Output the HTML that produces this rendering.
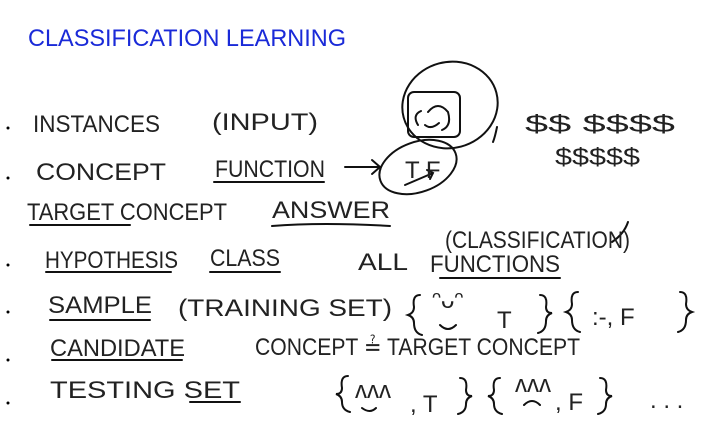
<!DOCTYPE html>
<html><head><meta charset="utf-8"><style>
html,body{margin:0;padding:0;background:#fff;width:712px;height:426px;overflow:hidden}
svg text{font-family:"Liberation Sans",sans-serif;fill:#222;font-size:24px}
</style></head><body>
<svg width="712" height="426" viewBox="0 0 712 426" xmlns="http://www.w3.org/2000/svg">
<g fill="none" stroke="#111" stroke-width="2" stroke-linecap="round">
<ellipse cx="450" cy="105" rx="48" ry="43" transform="rotate(-15 450 105)"/>
<rect x="408" y="92" width="52" height="45" rx="6"/>
<path d="M418 125 q-6 -10 3 -14 M428 112 q10 -12 20 0 q4 14 -6 18 M425 125 q6 5 14 -2"/>
<path d="M497 127 q-2 10 -4 15"/>
<ellipse cx="418" cy="167" rx="40" ry="25" transform="rotate(-20 418 167)"/>
<path d="M405 185 l28 -12 m-6 -3 l6 3 -3 6"/>
<path d="M345 167 h35 m-8 -7 l8 7 -8 7"/>
<path d="M214 182 h110 M30 225 h100 M46 272 h125 M210 272 h70 M50 320 h100 M52 360 h130 M190 402 h50 M440 278 h120 M272 226 q50 -4 118 0"/>
<path d="M612 242 q12 -8 16 -20"/>
<path d="M420 295 q-8 0 -6 12 q0 6 -6 8 q6 2 6 8 q0 10 8 12 M540 295 q8 0 6 12 q0 6 6 6 q-6 2 -6 8 q0 10 -8 12"/>
<path d="M578 292 q-8 0 -6 12 q0 6 -6 8 q6 2 6 8 q0 10 8 12 M680 292 q8 0 6 12 q0 6 6 8 q-6 2 -6 8 q0 10 -8 12"/>
<path d="M348 376 q-8 0 -6 12 q0 6 -6 6 q6 2 6 8 q0 8 8 10 M460 378 q8 0 6 12 q0 6 6 6 q-6 2 -6 8 q0 8 -8 10"/>
<path d="M500 378 q-8 0 -6 12 q0 6 -6 6 q6 2 6 8 q0 8 8 10 M600 378 q8 0 6 12 q0 6 6 6 q-6 2 -6 8 q0 8 -8 10"/>
<path d="M440 325 q8 8 16 0 M524 405 q8 -8 16 0 M362 408 q8 6 14 0"/>
</g>
<text x="28" y="46" font-size="22" style="fill:#1a2ad8" textLength="318" lengthAdjust="spacingAndGlyphs">CLASSIFICATION LEARNING</text>
<g><circle cx="8" cy="128" r="1.5"/><circle cx="8" cy="178" r="1.5"/><circle cx="8" cy="265" r="1.5"/><circle cx="8" cy="312" r="1.5"/><circle cx="8" cy="360" r="1.5"/><circle cx="8" cy="403" r="1.5"/></g>
<text x="33" y="132" textLength="127" lengthAdjust="spacingAndGlyphs">INSTANCES</text>
<text x="212" y="130" textLength="106" lengthAdjust="spacingAndGlyphs">(INPUT)</text>
<text x="36" y="180" textLength="130" lengthAdjust="spacingAndGlyphs">CONCEPT</text>
<text x="215" y="177" textLength="110" lengthAdjust="spacingAndGlyphs">FUNCTION</text>
<text x="405" y="178" font-size="22">T F</text>
<text x="525" y="132" font-size="22" textLength="150" lengthAdjust="spacingAndGlyphs">$$  $$$$</text>
<text x="555" y="165" font-size="22" textLength="85" lengthAdjust="spacingAndGlyphs">$$$$$</text>
<text x="27" y="220" textLength="200" lengthAdjust="spacingAndGlyphs">TARGET CONCEPT</text>
<text x="272" y="218" textLength="118" lengthAdjust="spacingAndGlyphs">ANSWER</text>
<text x="445" y="248" font-size="20" textLength="185" lengthAdjust="spacingAndGlyphs">(CLASSIFICATION)</text>
<text x="45" y="268" textLength="133" lengthAdjust="spacingAndGlyphs">HYPOTHESIS</text>
<text x="210" y="266" textLength="70" lengthAdjust="spacingAndGlyphs">CLASS</text>
<text x="358" y="270" textLength="50" lengthAdjust="spacingAndGlyphs">ALL</text>
<text x="430" y="272" textLength="130" lengthAdjust="spacingAndGlyphs">FUNCTIONS</text>
<text x="48" y="313" textLength="104" lengthAdjust="spacingAndGlyphs">SAMPLE</text>
<text x="178" y="316" textLength="214" lengthAdjust="spacingAndGlyphs">(TRAINING SET)</text>
<text x="432" y="308" font-size="14">ᵔᴗᵔ</text>
<text x="497" y="328" font-size="24">T</text>
<text x="592" y="325" font-size="24">:-, F</text>
<text x="50" y="356" textLength="135" lengthAdjust="spacingAndGlyphs">CANDIDATE</text>
<text x="255" y="355" font-size="20" textLength="325" lengthAdjust="spacingAndGlyphs">CONCEPT ≟ TARGET CONCEPT</text>
<text x="50" y="398" textLength="190" lengthAdjust="spacingAndGlyphs">TESTING SET</text>
<text x="355" y="398" font-size="12">ʌʌʌ</text>
<text x="410" y="412" font-size="24">, T</text>
<text x="515" y="392" font-size="12">ʌʌʌ</text>
<text x="555" y="410" font-size="24">, F</text>
<text x="650" y="408" font-size="20">. . .</text>
</svg>
</body></html>
